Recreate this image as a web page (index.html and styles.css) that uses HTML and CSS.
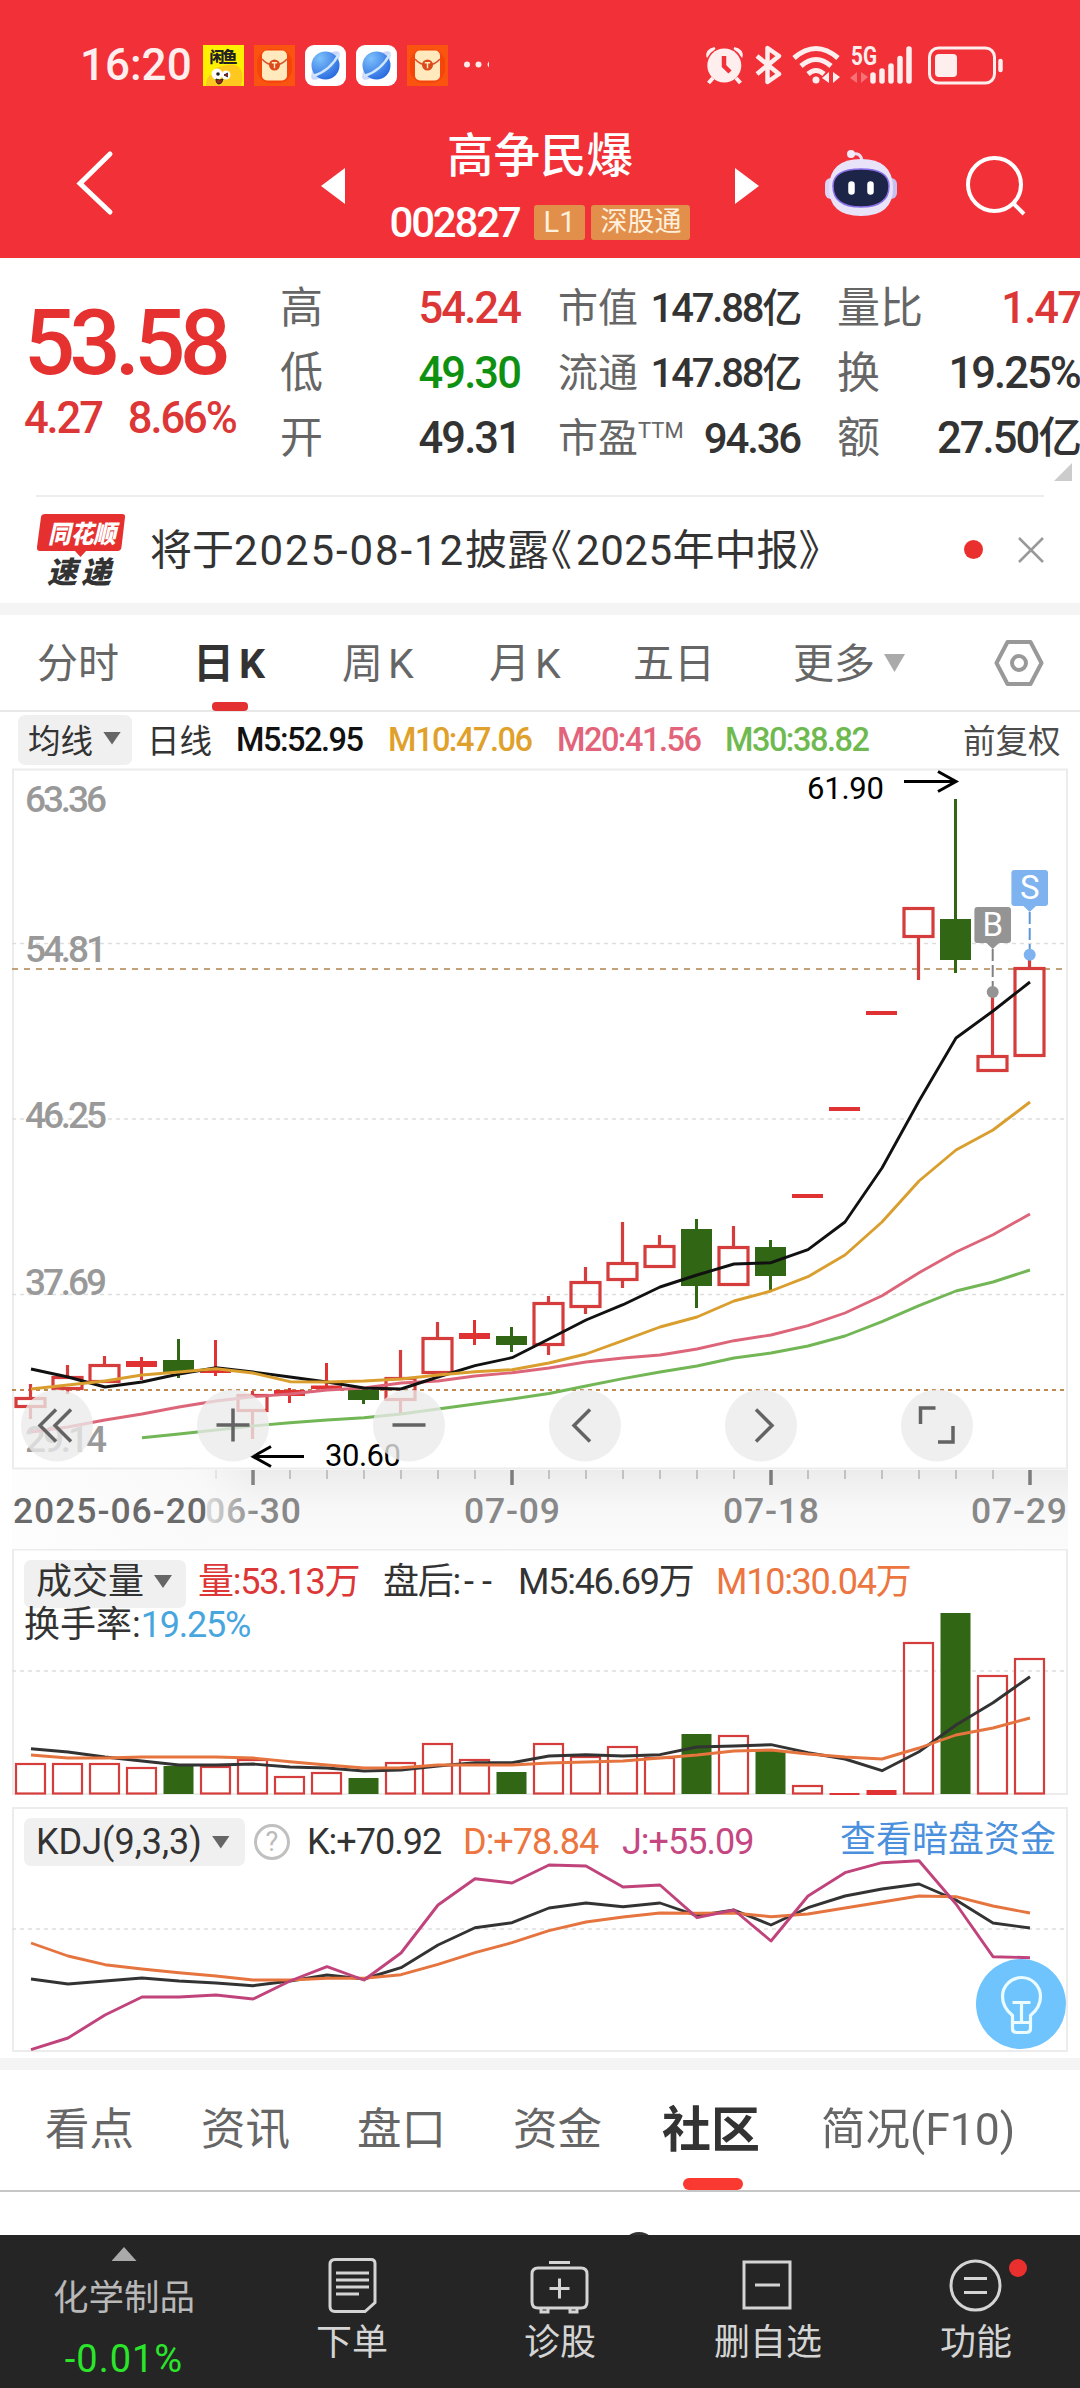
FILE: index.html
```html
<!doctype html>
<html lang="zh-CN">
<head>
<meta charset="utf-8">
<title>高争民爆 002827</title>
<link rel="stylesheet" href="styles.css">
</head>
<body>
<header class="top">
	<div class="status">
		<span class="clock">16:20</span>
		<svg class="apps" width="310" height="42" viewBox="203 44 310 42">
			<defs>
				<radialGradient id="planet" cx=".3" cy=".25" r=".8"><stop offset="0" stop-color="#7cc0fb"/><stop offset="1" stop-color="#2a6be0"/></radialGradient>
				<g id="bag">
					<rect width="41" height="41" fill="#fb5310"/>
					<rect x="3" y="4" width="35" height="34" rx="14" fill="#f4450a"/>
					<rect x="8" y="5.500" width="25" height="30" rx="5" fill="#ffe9bd"/>
					<path d="M8 14Q13 20 20.500 20T33 14" fill="none" stroke="#d9532a" stroke-width="1.500"/>
					<circle cx="20.500" cy="20" r="5.500" fill="#dc4a1c"/>
					<path d="M17.800 17.800h5.400M20.500 17.800v5.400" stroke="#ffe9bd" stroke-width="1.400"/>
				</g>
				<g id="browser">
					<rect width="41" height="41" rx="9" fill="#fff"/>
					<ellipse cx="20.500" cy="20.500" rx="19" ry="7" fill="#ccd7fb" transform="rotate(-45 20.500 20.500)"/>
					<circle cx="20.500" cy="20.500" r="14" fill="url(#planet)"/>
					<path d="M8 31Q25 26 34 9" fill="none" stroke="#cfe6ff" stroke-width="2.500"/>
				</g>
			</defs>
			<g transform="translate(203 45)">
				<rect width="41" height="41" fill="#fdf000"/>
				<text x="6.500" y="17" class="fish" textLength="28">闲鱼</text>
				<path d="M3 41Q3 31 9 29Q10 22 20 21Q34 17 38 25Q41 31 38 41z" fill="#ffc81e"/>
				<circle cx="14" cy="29" r="5.500" fill="#fff"/><circle cx="23" cy="30" r="4.500" fill="#fff"/>
				<circle cx="15" cy="29" r="1.800" fill="#222"/>
				<path d="M25 28l-4 2 4 2M13 34q4 2 7 0q-1 5-4 5t-3-5" fill="#a3281b" stroke="#222"/>
			</g>
			<use href="#bag" x="254" y="45"/>
			<use href="#browser" x="305" y="45"/>
			<use href="#browser" x="356" y="45"/>
			<use href="#bag" x="407" y="45"/>
			<g fill="#ffe9e9"><circle cx="467" cy="64.500" r="3"/><circle cx="478.500" cy="64.500" r="3"/><path d="M489 61.500v6q-3-3 0-6"/></g>
		</svg>
		<svg class="signals" width="310" height="42" viewBox="700 43 310 42" fill="#ffeeee" stroke="#ffeeee">
			<g stroke="none">
				<circle cx="724.300" cy="64.500" r="17"/>
				<path d="M706.500 56.500q-2-8 8-10.500l1 2q-5 3-8 8.500zM742.500 56.500q2-8-8-10.500l-1 2q5 3 8 8.500z"/>
			</g>
			<path d="M713 77l-4.500 5M736 77l4.500 5" stroke-width="4"/>
			<path d="M724 55v10l6 6" fill="none" stroke="#f13038" stroke-width="4.500"/>
			<path d="M757 55l22 18-11.500 8v-34l11.500 8-22 18" fill="none" stroke-width="4.500" stroke-linejoin="round"/>
			<g fill="none" stroke-width="5">
				<path d="M794 57Q816 38 838 57M801 65Q816 52 831 65M808 73Q816 66 824 73"/>
			</g>
			<circle cx="816" cy="79" r="3.500" stroke="none"/>
			<path d="M829 71v11l-7-5zM833 71v11l7-6z" stroke="none"/>
			<text x="851" y="64" class="net" textLength="26" lengthAdjust="spacingAndGlyphs">5G</text>
			<path d="M857 71v11l-7-5zM861 71v11l7-6z" stroke="none" opacity=".35"/>
			<path d="M873 74v6M882 70v10M891 65v15M900 57.500v22.500M909 48v32" stroke-width="5.500" stroke-linecap="round"/>
			<rect x="929.500" y="47" width="65" height="35" rx="9" fill="none" stroke-width="3"/>
			<rect x="935" y="53" width="22" height="23" rx="4" stroke="none"/>
			<path d="M1000.500 60v9" stroke-width="4.500" stroke-linecap="round"/>
		</svg>
	</div>
	<div class="titlebar">
		<svg width="50" height="70" viewBox="70 148 50 70"><path d="M110 154L80 183.500L110 212" fill="none" stroke="#fff" stroke-width="5" stroke-linecap="round"/></svg>
		<i class="prev"></i>
		<div class="stock">
			<h1>高争民爆</h1>
			<p><span class="code">002827</span><em class="l1">L1</em><em>深股通</em></p>
		</div>
		<i class="next"></i>
		<svg class="robot" width="74" height="70" viewBox="824 148 74 70">
			<path d="M852 154Q861 152 862 161" fill="none" stroke="#eadff5" stroke-width="3"/>
			<circle cx="851" cy="154" r="4" fill="#f3ebfa"/>
			<rect x="825" y="178" width="14" height="21" rx="6" fill="#dcd3f5"/><rect x="883" y="178" width="14" height="21" rx="6" fill="#c9c0f2"/>
			<path d="M829 188Q829 159 861 159T893 188Q893 216 861 216T829 188" fill="#e9e3f9"/>
			<path d="M833 186Q833 169 861 169T889 186Q889 207 861 207T833 186" fill="#1c2448" stroke="#8a70e8" stroke-width="1.500"/>
			<path d="M851.500 184.500v7M870.500 184.500v7" stroke="#fff" stroke-width="6.500" stroke-linecap="round"/>
		</svg>
		<svg class="search" width="64" height="64" viewBox="964 153 64 64" fill="none" stroke="#fff" stroke-width="4"><circle cx="994.500" cy="184.500" r="26.500"/><path d="M1013 203l11 11"/></svg>
	</div>
</header>

<section class="quote">
	<div class="price">
		<strong>53.58</strong>
		<p><span>4.27</span><span>8.66%</span></p>
	</div>
	<dl class="c1">
		<dt>高</dt><dd class="red">54.24</dd>
		<dt>低</dt><dd class="green">49.30</dd>
		<dt>开</dt><dd>49.31</dd>
	</dl>
	<dl class="c2">
		<dt>市值</dt><dd>147.88亿</dd>
		<dt>流通</dt><dd>147.88亿</dd>
		<dt>市盈<sup>TTM</sup></dt><dd class="pe">94.36</dd>
	</dl>
	<dl class="c3">
		<dt>量比</dt><dd class="red">1.47</dd>
		<dt>换</dt><dd>19.25%</dd>
		<dt>额</dt><dd>27.50亿</dd>
	</dl>
	<i class="corner"></i>
</section>

<section class="news">
	<svg width="92" height="74" viewBox="36 512 92 74">
		<path d="M42 513h80q3.500 0 3 3l-3.500 30q-.5 4-4 4h-31.500l-5.500 6-5.500-6h-35q-3.500 0-3-4l4-30q.5-3 4-3z" fill="#e5302f"/>
		<text class="logo1" x="48" y="542" textLength="68" lengthAdjust="spacingAndGlyphs">同花顺</text>
		<text class="logo2" x="47" y="582" textLength="64">速递</text>
	</svg>
	<p>将于<span>2025-08-12</span>披露<span class="open">《</span><span class="yr">2025</span>年中报》</p>
	<b></b>
	<svg width="26" height="26" viewBox="0 0 26 26"><path d="M1 1l24 24M25 1L1 25" stroke="#999" stroke-width="2.500"/></svg>
</section>

<nav class="period">
	<a>分时</a><a class="on">日<span>K</span></a><a>周<span>K</span></a><a>月<span>K</span></a><a>五日</a><a>更多<i></i></a>
	<svg width="50" height="48" viewBox="995 639 50 48" fill="none" stroke="#999" stroke-width="4"><path d="M1008.500 642h23l11 21-11 21h-23l-11-21z" stroke-linejoin="round"/><circle cx="1020" cy="663" r="7"/></svg>
</nav>

<div class="ma">
	<span class="pick">均线<i></i></span>
	<span class="day">日线</span>
	<span class="m5">M5:52.95</span>
	<span class="m10">M10:47.06</span>
	<span class="m20">M20:41.56</span>
	<span class="m30">M30:38.82</span>
	<span class="fq">前复权</span>
</div>

<svg class="kline" id="kline" width="1080" height="781" viewBox="0 768 1080 781">
	<defs>
		<linearGradient id="fade" x1="0" y1="0" x2="0" y2="1"><stop offset="0" stop-color="#ececec"/><stop offset=".5" stop-color="#f8f8f8"/><stop offset="1" stop-color="#fbfbfb"/></linearGradient>
		<linearGradient id="veil"><stop offset="0" stop-color="#fdfdfd"/><stop offset=".75" stop-color="#fafafa" stop-opacity=".9"/><stop offset="1" stop-color="#fafafa" stop-opacity="0"/></linearGradient>
	</defs>
	<rect x="13" y="769.500" width="1054" height="699" class="frame"/>
	<path d="M12 943.500H1066M12 1119H1066M12 1294.500H1066" class="grid"/>
	<path d="M12 969H1066" class="now"/>
	<path d="M12 1390H1066" class="cost"/>
	<g class="scale">
		<text x="25" y="812" textLength="82">63.36</text>
		<text x="25" y="962" textLength="82">54.81</text>
		<text x="25" y="1128" textLength="82">46.25</text>
		<text x="25" y="1295" textLength="82">37.69</text>
		<text x="25" y="1452" textLength="82">29.14</text>
	</g>
	<g id="candles"></g>
	<g id="lines"></g>
	<g class="note">
		<text x="807" y="799" textLength="77">61.90</text>
		<path d="M904 781.500H955M938 771.500l18 10-18 10"/>
		<text x="325" y="1466" textLength="76">30.60</text>
		<path d="M304 1456.500H254M271 1446.500l-18 10 18 10"/>
	</g>
	<g class="mark sell">
		<path d="M1029.700 912V950" stroke-dasharray="12 4"/>
		<circle cx="1029.700" cy="954.700" r="6"/>
		<path class="tag" d="M1015 870h30q3 0 3 3v30q0 3-3 3h-9l-6.300 6-6.300-6h-9q-3 0-3-3v-30q0-3 3-3z"/>
		<text x="1029.700" y="899">S</text>
	</g>
	<g class="mark buy">
		<path d="M992.700 949V990" stroke-dasharray="12 4"/>
		<circle cx="992.700" cy="992" r="6"/>
		<path class="tag" d="M978 907h30q3 0 3 3v30q0 3-3 3h-9l-6.300 6-6.300-6h-9q-3 0-3-3v-30q0-3 3-3z"/>
		<text x="992.700" y="936">B</text>
	</g>
	<rect x="12" y="1470" width="1056" height="79" fill="url(#fade)"/>
	<g class="ticks" id="ticks"></g>
	<g class="dates">
		<text x="205" y="1523" textLength="96">06-30</text>
		<text x="464" y="1523" textLength="96">07-09</text>
		<text x="723" y="1523" textLength="96">07-18</text>
		<text x="971" y="1523" textLength="96">07-29</text>
		<rect x="12" y="1470" width="245" height="79" fill="url(#veil)"/>
		<text x="13" y="1523" textLength="194" class="first">2025-06-20</text>
	</g>
	<g class="tools">
		<circle cx="57" cy="1425.500" r="36"/><circle cx="233" cy="1425.500" r="36"/><circle cx="409" cy="1425.500" r="36"/>
		<circle cx="585" cy="1425.500" r="36"/><circle cx="761" cy="1425.500" r="36"/><circle cx="937" cy="1425.500" r="36"/>
		<path d="M56 1409.500l-16 16 16 16M71 1409.500l-16 16 16 16M233 1408.500v33M216.500 1425h33M392.500 1425h33M590 1409.500l-16 16 16 16M756 1409.500l16 16-16 16"/>
		<path d="M920.500 1424v-16h15M953 1426v16h-15"/>
	</g>
</svg>

<section class="panel">
	<svg id="volume" width="1080" height="258" viewBox="0 1549 1080 258">
		<path d="M13 1794V1549.500H1067V1794z" class="frame"/>
		<path d="M12 1671H1066" class="grid"/>
	</svg>
	<div class="legend">
		<p>
			<span class="pick cn">成交量<i></i></span>
			<span class="cn red">量:53.13万</span>
			<span class="cn">盘后:<u>--</u></span>
			<span class="cn">M5:46.69万</span>
			<span class="cn orange">M10:30.04万</span>
		</p>
		<p class="turn">换手率:<span class="blue">19.25%</span></p>
	</div>
</section>

<section class="panel kdj">
	<svg id="kdj" width="1080" height="251" viewBox="0 1807 1080 251">
		<rect x="13" y="1808" width="1054" height="243" class="frame"/>
		<path d="M12 1929H1066" class="grid"/>
	</svg>
	<div class="legend">
		<p>
			<span class="pick">KDJ(9,3,3)<i></i></span>
			<b class="help">?</b>
			<span>K:+70.92</span>
			<span class="orange">D:+78.84</span>
			<span class="purple">J:+55.09</span>
			<a class="cn">查看暗盘资金</a>
		</p>
	</div>
	<svg class="bulb" width="90" height="90" viewBox="975.500 1959.500 90 90" fill="none" stroke="#eafcff" stroke-width="3.200">
		<circle cx="1020.500" cy="2004.500" r="45" fill="#6fc4fe" stroke="none"/>
		<path d="M1012 2023v-7q-10-8-10-19a19 19 0 0 1 38 0q0 11-10 19v7zM1012 2023v6q0 4 4 4h10q4 0 4-4v-6M1012 2003h18M1021 2003v20"/>
	</svg>
</section>

<nav class="tabs">
	<a>看点</a><a>资讯</a><a>盘口</a><a>资金</a><a class="on">社区</a><a class="last">简况(F10)</a>
</nav>
<div class="feed"><i></i></div>

<footer>
	<div class="index"><i></i><span>化学制品</span><b>-0.01%</b></div>
	<div>
		<svg width="60" height="60" viewBox="322 2255 60 60"><path d="M335 2259.500h36q4 0 4 4v39l-10 9h-30q-5 0-5-5v-42q0-5 5-5zM336 2273h33M336 2280h33M336 2287h33M336 2294h23"/></svg>
		<span>下单</span>
	</div>
	<div>
		<svg width="60" height="60" viewBox="530 2255 60 60"><path d="M538 2268h43q6 0 6 6v28q0 6-6 6h-43q-6 0-6-6v-28q0-6 6-6zM549 2262.500h21M549.500 2288.500h20M559.500 2278.500v20M541 2309v3h7v-3M570 2309v3h7v-3"/></svg>
		<span>诊股</span>
	</div>
	<div>
		<svg width="60" height="60" viewBox="738 2255 60 60"><path d="M744 2262h46v46h-46zM755 2285h25"/></svg>
		<span>删自选</span>
	</div>
	<div class="more">
		<svg width="60" height="60" viewBox="946 2255 60 60"><circle cx="975.500" cy="2285.500" r="24.500"/><path d="M964 2278.500h23M964 2292.500h23"/></svg>
		<span>功能</span>
		<em></em>
	</div>
</footer>
<script src="script.js"></script>
</body>
</html>
```
FILE: styles.css
```css
body,*{
	margin:0;
	padding:0;
	box-sizing:border-box;
}

body{
	width:1080px;
	height:2388px;
	overflow:hidden;
	background:#fff;
	color:#333;
	font-family:Roboto,"Noto Sans CJK SC",sans-serif;
	font-stretch:88%;
	font-variant-ligatures:none;
}

i,em{
	font-style:normal;
}

svg{
	display:block;
	flex:none;
}

.red{ color:#dd3636; }
.green{ color:#0e9110; }
.orange{ color:#ec7540; }
.blue{ color:#48a6de; }
.purple{ color:#c54782; }

/* 顶部 */
.top{
	height:258px;
	background:#f13038;
	color:#fff;
}

.status{
	display:flex;
	height:130px;
	padding:44px 70px 0 80px;
}

.clock{
	width:123px;
	font-size:44px;
	line-height:42px;
	font-weight:500;
	color:#ffeeee;
}

.signals{
	margin-left:187px;
}

.fish{
	font-size:15px;
	font-weight:900;
	fill:#222;
}

.net{
	font-size:25px;
	font-weight:700;
	stroke:none;
}

.titlebar{
	display:flex;
	height:128px;
	padding-left:70px;
}

.titlebar > svg{
	margin-top:18px;
}

.prev,.next{
	width:24px;
	height:36px;
	margin-top:38px;
	background:#fff;
}

.prev{
	margin-left:201px;
	clip-path:polygon(0 50%,100% 0,100% 100%);
}

.next{
	clip-path:polygon(100% 50%,0 0,0 100%);
}

.stock{
	width:390px;
	text-align:center;
}

.stock h1{
	height:66px;
	font-size:46.500px;
	line-height:52px;
	font-weight:500;
}

.stock p{
	display:flex;
	align-items:center;
	justify-content:center;
	height:52px;
}

.code{
	font-size:42px;
	font-weight:500;
	margin-right:14px;
	letter-spacing:-2.200px;
}

.stock em{
	height:35px;
	padding:0 9px;
	border-radius:3px;
	background:#e28f4b;
	color:#fff0dc;
	font-size:27px;
	line-height:34px;
}

.stock .l1{
	padding:0 10px;
	margin-right:6px;
	font-size:29px;
}

.robot{
	margin-left:65px;
}

.titlebar .search{
	margin:23px 0 0 66px;
}

/* 报价 */
.quote{
	display:flex;
	position:relative;
	height:238px;
	padding-left:24px;
}

.price{
	width:256px;
	color:#e63131;
}

.price strong{
	display:block;
	height:129px;
	font-size:90px;
	line-height:172px;
	font-weight:500;
	letter-spacing:-5.700px;
}

.price p{
	display:flex;
	gap:26px;
	font-size:43.500px;
	font-weight:500;
	line-height:64px;
	letter-spacing:-2.100px;
	color:#dd3636;
}

dl{
	display:grid;
	grid-template-columns:90px 1fr;
	grid-auto-rows:65px;
	padding-top:18px;
	line-height:65px;
}

dt{
	color:#666;
	font-size:43px;
	white-space:nowrap;
}

dd{
	font-size:43.500px;
	font-weight:500;
	text-align:right;
	letter-spacing:-1.900px;
	white-space:nowrap;
}

.c1{ width:240px; margin-right:38px; }
.c2{ width:242px; margin-right:37px; }
.c2 dt{ font-size:40px; }
.c2 dd{ font-size:40px; letter-spacing:-2.200px; }
.c2 .pe{ font-size:42px; }
.c3{ width:243px; }

sup{
	font-size:22px;
	line-height:0;
}

.corner{
	position:absolute;
	right:8px;
	bottom:15px;
	width:18px;
	height:18px;
	background:#ccc;
	clip-path:polygon(100% 0,100% 100%,0 100%);
}

/* 速递 */
.news{
	display:flex;
	align-items:center;
	height:107px;
	margin:0 36px;
	border-top:2px solid #eee;
	position:relative;
	top:-1px;
}

.news p{
	flex:1;
	padding:0 0 6px 22px;
	font-size:42px;
	white-space:nowrap;
}

.news p span{ letter-spacing:1.900px; }
.news p .yr{ letter-spacing:.5px; }

.news p .open{
	margin:0 4px 0 -19px;
	letter-spacing:0;
}

.news b{
	width:19px;
	height:19px;
	margin-right:35px;
	border-radius:50%;
	background:#e9302f;
}

.logo1,.logo2{
	font-size:25px;
	font-weight:900;
	font-style:italic;
	fill:#fff;
}

.logo2{
	font-size:30px;
	fill:#333;
}

/* 周期 */
.period{
	display:grid;
	grid-template-columns:158px 147px 147px 144px 160px 201px 50px;
	align-items:center;
	height:109px;
	padding-left:37px;
	border-top:12px solid #f4f4f4;
	border-bottom:2px solid #e8e8e8;
	font-size:41px;
	color:#666;
}

.period a{
	height:95px;
	line-height:99px;
	white-space:nowrap;
}

.period a span{ margin-left:5px; }

.period a i,.pick i{
	display:inline-block;
	width:21px;
	height:18px;
	margin-left:9px;
	background:#aaa;
	clip-path:polygon(0 0,100% 0,50% 100%);
}

.period a i{ margin-bottom:6px; }

.period .on{
	position:relative;
	left:-2px;
	font-weight:700;
	color:#333;
}

.period .on::after{
	content:"";
	position:absolute;
	left:19px;
	bottom:-1px;
	width:36px;
	height:9px;
	border-radius:4px;
	background:#e33131;
}

.pick{
	display:flex;
	align-items:center;
	padding-left:10px;
	border-radius:7px;
	background:#f0f0f0;
	color:#333;
}

.pick i{
	width:18px;
	height:13px;
	margin-left:10px;
	background:#666;
}

.ma{
	display:grid;
	grid-template-columns:129px 89px 152px 169px 168px 238px auto;
	align-items:center;
	height:56px;
	padding-left:18px;
	font-size:32.500px;
	white-space:nowrap;
}

.ma .pick{
	width:114px;
	height:50px;
}

.ma span{
	font-weight:500;
	letter-spacing:-1.500px;
}

.ma .pick,.ma .day,.ma .fq{
	padding-bottom:4px;
	font-weight:400;
	letter-spacing:0;
}

.m5{ color:#111; }
.m10{ color:#dfa12b; }
.m20{ color:#e2637a; }
.m30{ color:#6fba50; }
.ma .fq{ color:#4c4c4c; }

/* 图表 */
.frame{
	fill:none;
	stroke:#ececec;
	stroke-width:2;
}

.grid{
	stroke:#dedede;
	stroke-width:1.300;
	stroke-dasharray:4 4;
}

.now{
	stroke:#c2a27a;
	stroke-width:2;
	stroke-dasharray:6 6;
}

.cost{
	stroke:#bd8b51;
	stroke-width:2;
	stroke-dasharray:4 4;
}

.scale{
	font-size:37px;
	font-weight:500;
	fill:#999;
}

.up{ fill:none; stroke:#d53c3c; stroke-width:3.200; }
.upfill{ fill:#e03232; stroke:none; }
.down{ fill:#306614; stroke:none; }
.bar.up{ stroke-width:2.200; }

.line{
	fill:none;
	stroke-width:2.900;
	stroke-linejoin:round;
}

.note{
	font-size:31px;
	fill:#000;
}

.note path{
	fill:none;
	stroke:#000;
	stroke-width:3;
}

.mark text{
	font-size:33px;
	fill:#fff;
	text-anchor:middle;
}

.sell{ fill:#7fb3f0; stroke:#5a97d8; stroke-width:2; }
.buy{ fill:#949494; stroke:#808080; stroke-width:2; }
.mark circle,.mark text,.mark .tag{ stroke:none; }

.ticks{
	stroke:#c2c2c2;
	stroke-width:2;
}

.ticks .big{
	stroke:#7c7c7c;
	stroke-width:3.500;
}

.dates{
	font-size:35.500px;
	font-weight:500;
	fill:#888;
}

.dates .first{ fill:#6a6a6a; }

.tools circle{
	fill:#eaeaea;
	fill-opacity:.78;
}

.tools path{
	fill:none;
	stroke:#636363;
	stroke-width:3.500;
}

.panel{
	display:grid;
	height:258px;
}

.panel > *{
	grid-area:1/1;
}

.legend{
	padding:11px 0 0 24px;
	font-size:36px;
	line-height:40px;
	white-space:nowrap;
}

.legend p{
	display:grid;
	grid-template-columns:174px 185px 135px 198px auto;
	grid-template-rows:48px;
	align-items:center;
	height:48px;
}

.legend p span{
	letter-spacing:-1.250px;
}

.legend .pick{
	width:162px;
	height:48px;
	padding-left:12px;
	letter-spacing:0;
}

.legend .cn{
	padding-bottom:5px;
}

.legend u{
	letter-spacing:8px;
	margin-left:4px;
	text-decoration:none;
}

.legend .turn{
	display:block;
	height:34px;
	line-height:34px;
}

.kdj{
	height:251px;
}

.kdj .legend p{
	grid-template-columns:230px 53px 156px 159px 218px auto;
}

.kdj .legend p span{
	letter-spacing:-1px;
}

.kdj .legend p .pick{
	width:221px;
	letter-spacing:0;
}

.help{
	width:36px;
	height:36px;
	border:3px solid #c0c0c0;
	border-radius:50%;
	color:#bbb;
	font-size:27px;
	font-weight:400;
	line-height:31px;
	text-align:center;
}

.legend a{
	color:#4a90dd;
}

.bulb{
	align-self:start;
	margin:152px 0 0 976px;
}

/* 底部标签 */
.tabs{
	display:grid;
	grid-template-columns:156px 156px 156px 149px 159px auto;
	align-items:center;
	height:134px;
	padding-left:45px;
	border-top:12px solid #f4f4f4;
	border-bottom:2px solid #c6c6c6;
	font-size:44.500px;
	color:#666;
}

.tabs a{
	height:120px;
	line-height:121px;
}

.tabs .on{
	position:relative;
	font-size:49px;
	font-weight:700;
	color:#333;
}

.tabs .on::after{
	content:"";
	position:absolute;
	left:21px;
	bottom:0;
	width:60px;
	height:12px;
	border-radius:6px;
	background:#fa3a30;
}

.tabs .last{
	background:linear-gradient(90deg,#666 75%,#b5b5b5 85%);
	background-clip:text;
	-webkit-background-clip:text;
	color:transparent;
}

.feed{
	height:43px;
	overflow:hidden;
}

.feed i{
	display:block;
	width:34px;
	height:34px;
	margin:40px 0 0 622px;
	border-radius:50%;
	background:#333;
}

footer{
	display:grid;
	grid-template-columns:248px 208px 208px 208px 208px;
	height:153px;
	background:#252525;
	color:#d4d4d4;
	font-size:36px;
	text-align:center;
}

footer div{
	display:flex;
	flex-direction:column;
	align-items:center;
	padding-top:20px;
}

footer svg{
	fill:none;
	stroke:#d4d4d4;
	stroke-width:3;
}

footer span{
	line-height:56px;
}

footer .index{
	padding-top:12px;
	color:#b8b8b8;
	font-size:35.500px;
}

.index i{
	width:25px;
	height:14px;
	background:#aaa;
	clip-path:polygon(50% 0,100% 100%,0 100%);
}

.index span{
	line-height:74px;
}

.index b{
	font-size:38px;
	font-weight:400;
	line-height:48px;
	letter-spacing:1px;
	color:#2be52b;
}

.more{
	position:relative;
}

.more em{
	position:absolute;
	left:137px;
	top:24px;
	width:18px;
	height:18px;
	border-radius:50%;
	background:#e9302f;
}
```
FILE: script.js
```js
var X0=31, STEP=37;

function $(id){
	return document.getElementById(id);
}

function el(parent,name,attrs){
	var node=document.createElementNS("http://www.w3.org/2000/svg",name);
	for(var k in attrs){
		node.setAttribute(k,attrs[k]);
	}
	parent.appendChild(node);
}

function line(parent,ys,color,start){
	var pts=ys.map(function(y,i){
		return (X0+(i+(start||0))*STEP)+","+y;
	});
	el(parent,"polyline",{"class":"line",points:pts.join(" "),stroke:color});
}

//u 空心阳线 f 实心阳线 d 阴线: [类型, 最高, 实体上, 实体下, 最低]
var candles=[
	["u",1384,1397,1408,1419],["u",1365,1376,1390,1394],["u",1356,1364,1383,1383],["f",1357,1361,1367,1380],
	["d",1339,1360,1372,1378],["f",1340,1369,1373,1376],["u",1391,1394,1412,1439],["f",1388,1390,1396,1403],
	["f",1363,1385.5,1389,1389],["d",1388,1389.5,1400,1404],["u",1350,1377,1401,1415],["u",1322,1337,1374,1374],
	["f",1320,1333,1339,1345],["d",1327,1336,1345,1352],["u",1296,1302,1346,1355],["u",1267,1281,1308,1314],
	["u",1222,1262,1281,1288],["u",1235,1245,1268,1268],["d",1219,1229,1286,1308],["u",1226,1246,1286,1286],
	["d",1240,1247,1276,1291],["f",1194,1194,1198,1198],["f",1107,1107,1111,1111],["f",1011,1011,1015,1015],
	["u",907,907,938,980],["d",799,919,960,973],["u",992,1055,1072,1072],["u",955,967,1057,1057]
];

candles.forEach(function(c,i){
	var g=$("candles"), x=X0+i*STEP-.5;
	if(c[0]=="u"){
		el(g,"rect",{"class":"up",x:x-14.5,y:c[2]+1.5,width:29,height:c[3]-c[2]-3});
		el(g,"path",{"class":"up",d:"M"+x+" "+c[1]+"V"+c[2]+"M"+x+" "+c[3]+"V"+c[4]});
	}else{
		var cls=c[0]=="f"?"upfill":"down";
		el(g,"rect",{"class":cls,x:x-15.5,y:c[2],width:31,height:c[3]-c[2]});
		el(g,"rect",{"class":cls,x:x-1.5,y:c[1],width:3,height:c[4]-c[1]});
	}
});

line($("lines"),[1437.7,1434,1430,1426,1422.7,1420,1417.7,1414,1409,1404,1399,1393.5,1386,1378.7,1372,1366,1358,1353,1346,1336,1321.7,1305.7,1291,1282,1270],"#72b656",3);
line($("lines"),[1432,1427,1420,1414,1407,1401,1396.7,1394,1390,1388,1383,1381,1376,1372.7,1368,1362,1358,1355,1349,1340.7,1335,1325.7,1313,1295.7,1272.7,1252,1234.7,1214],"#dd6579");
line($("lines"),[1369,1377,1387,1382,1374,1367.7,1372,1377,1382,1388,1389,1377,1365.7,1357.7,1339,1320,1304.7,1287,1275,1264,1262.7,1249.7,1222,1168,1101,1038,1011,982],"#111");
line($("lines"),[1389,1385,1381,1375,1372,1368.7,1373,1381.7,1382,1381,1379,1375,1371.7,1369.7,1363,1354,1340.7,1327,1317,1301,1291,1276.7,1255,1222,1181,1150,1130,1102],"#d99e2d");

for(var i=5;i<28;i++){
	var big=(i-6)%7==0;
	el($("ticks"),"path",{"class":big?"big":"",d:"M"+(X0+i*STEP)+" 1470v"+(big?15:9)});
}

//成交量柱顶, 带 g 的为阴线
var volume=[1764,1764,1764,1768,"g1766",1767,1760,1777,1773,"g1778",1763,1744,1760,"g1772",1744,1757,1747,1758,"g1734",1736,"g1751",1786,1793,1790,1643,"g1613",1676,1659];

volume.forEach(function(v,i){
	var x=X0+i*STEP-.5;
	if(typeof v=="string"){
		var top=+v.slice(1);
		el($("volume"),"rect",{"class":"down",x:x-15,y:top,width:30,height:1794-top});
	}else if(v>=1790){
		el($("volume"),"rect",{"class":"upfill",x:x-15,y:v,width:30,height:1795-v});
	}else{
		el($("volume"),"rect",{"class":"bar up",x:x-14.5,y:v,width:29,height:1793.5-v});
	}
});

line($("volume"),[1748.7,1752,1757,1761,1765,1765,1764,1767,1768,1771,1770,1766,1762.7,1762.7,1756,1754.7,1756,1754.7,1747,1746,1744.7,1752.7,1759,1770.7,1751.7,1725,1702.7,1676.7],"#333");
line($("volume"),[1755,1758,1758,1757,1757,1757,1758,1761.7,1765,1768,1767.7,1765,1765,1765,1763,1762,1761,1758,1755,1751,1750,1754,1757,1759,1748,1735,1728,1718],"#e5743f");

line($("kdj"),[1979,1984,1981,1978,1981,1983,1985.7,1981,1975,1979,1967.7,1945,1927.7,1922.7,1908,1903,1906.7,1903,1915.7,1910,1925,1907.7,1896,1889,1884,1900,1923,1928],"#333");
line($("kdj"),[1943,1956,1964.7,1969,1972.7,1976,1980,1980,1978.3,1978.3,1974.7,1964.3,1952.7,1942.7,1930.7,1922,1917,1913,1913.3,1913,1916.7,1914,1908,1902,1896,1896.7,1906,1913],"#e5743f");
line($("kdj"),[2049.7,2038,2015,1997,1997,1995,1999,1981,1966.7,1980,1953,1905,1878.7,1883,1865,1866,1887,1885,1917.7,1910,1941,1896,1872.7,1862.7,1860.7,1904,1956.7,1957.7],"#c0437c");
```
